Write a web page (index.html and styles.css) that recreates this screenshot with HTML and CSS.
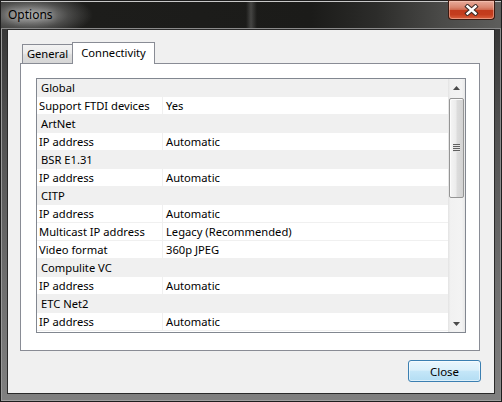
FILE: index.html
```html
<!DOCTYPE html>
<html>
<head>
<meta charset="utf-8">
<title>Options</title>
<link rel="stylesheet" href="styles.css">
</head>
<body>
<div class="window">
  <div class="titlebar">
    <span class="title">Options</span>
    <div class="xbtn">
      <svg width="15" height="12" viewBox="0 0 15 12">
        <path class="xo" d="M3.5 2.5 L11.5 9.5 M11.5 2.5 L3.5 9.5"/>
        <path class="xi" d="M3.5 2.5 L11.5 9.5 M11.5 2.5 L3.5 9.5"/>
      </svg>
    </div>
  </div>
  <div class="client">
    <div class="tabs">
      <div class="tab">General</div>
      <div class="tab active">Connectivity</div>
    </div>
    <div class="panel">
      <div class="list">
        <div class="rows">
          <div class="row head"><span class="c1">Global</span></div>
          <div class="row"><span class="c1">Support FTDI devices</span><span class="c2">Yes</span></div>
          <div class="row head"><span class="c1">ArtNet</span></div>
          <div class="row"><span class="c1">IP address</span><span class="c2">Automatic</span></div>
          <div class="row head"><span class="c1">BSR E1.31</span></div>
          <div class="row"><span class="c1">IP address</span><span class="c2">Automatic</span></div>
          <div class="row head"><span class="c1">CITP</span></div>
          <div class="row"><span class="c1">IP address</span><span class="c2">Automatic</span></div>
          <div class="row"><span class="c1">Multicast IP address</span><span class="c2">Legacy (Recommended)</span></div>
          <div class="row"><span class="c1">Video format</span><span class="c2">360p JPEG</span></div>
          <div class="row head"><span class="c1">Compulite VC</span></div>
          <div class="row"><span class="c1">IP address</span><span class="c2">Automatic</span></div>
          <div class="row head"><span class="c1">ETC Net2</span></div>
          <div class="row"><span class="c1">IP address</span><span class="c2">Automatic</span></div>
        </div>
        <div class="vscroll">
          <div class="arrow">
            <svg width="7" height="4" viewBox="0 0 7 4"><polygon points="0,4 3.5,0 7,4" class="tri"/></svg>
          </div>
          <div class="track">
            <div class="thumb"><span class="grip"></span></div>
          </div>
          <div class="arrow">
            <svg width="7" height="4" viewBox="0 0 7 4"><polygon points="0,0 7,0 3.5,4" class="tri"/></svg>
          </div>
        </div>
      </div>
    </div>
    <div class="footer">
      <button class="btn">Close</button>
    </div>
  </div>
</div>
</body>
</html>
```
FILE: styles.css
```css
html, body {
  margin: 0;
  padding: 0;
}

body {
  background: #000;
  font-family: "Noto Sans", "Open Sans", "DejaVu Sans", sans-serif;
  font-size: 11.2px;
  color: #000;
}

.window {
  width: 502px;
  height: 402px;
  box-sizing: border-box;
  border: 1px solid #1e1e1e;
  padding: 0 6px 7px;
  display: flex;
  flex-direction: column;
  background:
    linear-gradient(90deg, #9a9a9a 0, #9a9a9a 1px, transparent 1px, transparent 499px, #8a8a8a 499px),
    linear-gradient(180deg, #303030 0, #4f4f4f 30%, #6e6e6e 70%, #808080 100%);
  box-shadow: inset 0 -1px 0 #a0a0a0;
}

.titlebar {
  height: 28px;
  margin: 0 -6px;
  padding: 0 6px;
  display: flex;
  justify-content: space-between;
  align-items: flex-start;
  background:
    radial-gradient(62px 22px at 30px 14px, rgba(190, 190, 190, 0.85), rgba(150, 150, 150, 0.35) 60%, rgba(120, 120, 120, 0) 100%),
    linear-gradient(90deg, rgba(255, 255, 255, 0) 245px, rgba(255, 255, 255, 0.18) 250px, rgba(255, 255, 255, 0) 256px),
    linear-gradient(90deg, #2c2c2a 0%, #1d1d1b 18%, #1b1b19 62%, #2c2c2a 75%, #4a4a48 88%, #5e5e5c 100%);
  box-shadow: inset 0 1px 0 #c8c8c8, inset 0 -1px 0 #8a8a8a;
}

.title {
  margin: 6px 0 0 1px;
  font-size: 12px;
  line-height: 16px;
  color: #000;
  text-shadow: 0 0 6px rgba(255, 255, 255, 0.6);
}

.xbtn {
  width: 47px;
  height: 20px;
  margin-top: -1px;
  box-sizing: border-box;
  border: 1px solid #3a1a12;
  border-top-color: #5a2a1e;
  border-radius: 0 0 4px 4px;
  background: linear-gradient(180deg, #e8ab9b 0, #d98670 35%, #cf6a50 48%, #c23b1d 52%, #c43d1e 75%, #d9613f 100%);
  box-shadow: inset 0 0 0 1px rgba(255, 215, 200, 0.45);
  display: flex;
  align-items: center;
  justify-content: center;
}

.xo {
  fill: none;
  stroke: #3b2a26;
  stroke-width: 4.4;
  stroke-linecap: square;
}

.xi {
  fill: none;
  stroke: #ffffff;
  stroke-width: 2.4;
  stroke-linecap: square;
}

.client {
  flex: 1;
  display: flex;
  flex-direction: column;
  border: 1px solid #2a2a2a;
  background: #f0f0f0;
  padding: 12px 14px 11px 12px;
}

.tabs {
  display: flex;
  align-items: flex-end;
  height: 21px;
  padding-left: 2px;
}

.tab {
  box-sizing: border-box;
  width: 51px;
  height: 19px;
  border: 1px solid #898c95;
  border-bottom: none;
  padding-top: 1px;
  line-height: 15px;
  text-align: center;
  background: linear-gradient(180deg, #f3f3f3 0, #ebebeb 45%, #dedede 55%, #d6d6d6 100%);
}

.tab.active {
  width: 83px;
  height: 22px;
  margin-left: -1px;
  margin-bottom: -1px;
  padding-top: 2px;
  background: #fff;
  position: relative;
  z-index: 1;
}

.panel {
  flex: 1;
  display: flex;
  box-sizing: border-box;
  border: 1px solid #898c95;
  background: #fff;
  padding: 14px 13px 17px 15px;
}

.list {
  flex: 1;
  display: flex;
  border: 1px solid #828790;
  background: #fff;
  overflow: hidden;
}

.rows {
  flex: 1;
  overflow: hidden;
}

.row {
  display: flex;
  height: 18px;
  box-sizing: border-box;
  line-height: 18px;
  border-bottom: 1px solid #f0f0f0;
  white-space: nowrap;
}

.row .c1 {
  width: 126px;
  flex: none;
  box-sizing: border-box;
  padding-left: 2px;
  border-right: 1px solid #f0f0f0;
  overflow: hidden;
}

.row .c2 {
  padding-left: 3px;
}

.row.head {
  background: #f0f0f0;
  border-bottom: none;
}

.row.head .c1 {
  padding-left: 4px;
  border-right: none;
}

.vscroll {
  width: 17px;
  flex: none;
  display: flex;
  flex-direction: column;
  background: linear-gradient(90deg, #e3e3e3 0, #f1f1f1 15%, #f3f3f3 80%, #e8e8e8 100%);
}

.arrow {
  height: 17px;
  display: flex;
  align-items: center;
  justify-content: center;
}

.tri {
  fill: #4a4a4a;
}

.track {
  flex: 1;
}

.thumb {
  margin: 2px 1px 0;
  height: 100px;
  box-sizing: border-box;
  border: 1px solid #959595;
  border-radius: 2px;
  background: linear-gradient(90deg, #f5f5f5 0, #ececec 45%, #dcdcdc 55%, #d3d3d3 100%);
  box-shadow: inset 1px 1px 0 #fbfbfb;
  display: flex;
  align-items: center;
  justify-content: center;
}

.grip {
  width: 7px;
  height: 8px;
  background: repeating-linear-gradient(180deg, #606060 0, #606060 1px, #e6e6e6 1px, #e6e6e6 2px);
}

.footer {
  margin-top: 9px;
  display: flex;
  justify-content: flex-end;
}

.btn {
  width: 73px;
  height: 22px;
  margin-right: -1px;
  box-sizing: border-box;
  border: 1px solid #3c7fb1;
  border-radius: 3px;
  padding: 0;
  font-family: "Noto Sans", "Open Sans", "DejaVu Sans", sans-serif;
  font-size: 11.5px;
  color: #000;
  background: linear-gradient(180deg, #eaf6fd 0, #dbf0fb 45%, #c4e6f8 52%, #b3ddf3 100%);
  box-shadow: inset 0 0 0 1px rgba(255, 255, 255, 0.55);
}
```
